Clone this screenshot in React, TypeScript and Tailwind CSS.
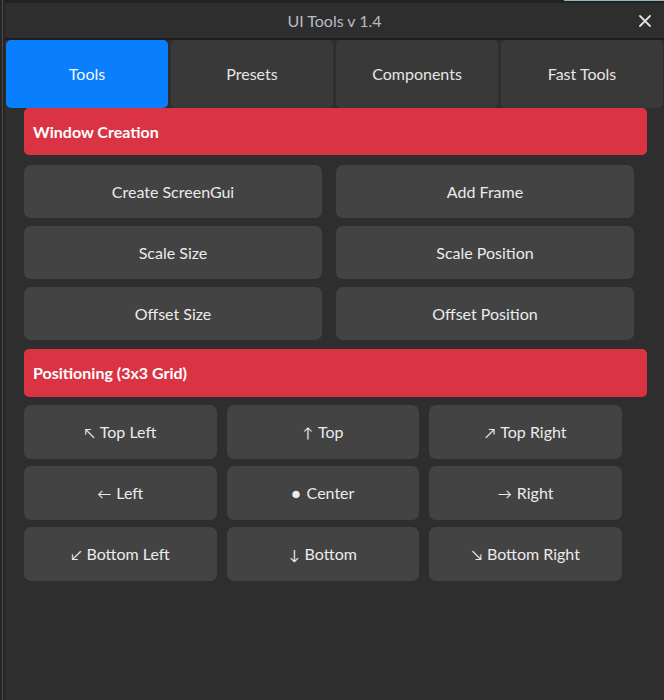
import React from "react";

const font = { fontFamily: "Lato, 'Open Sans', sans-serif" };

function Btn({ children, className = "" }: { children: React.ReactNode; className?: string }) {
  return (
    <div
      className={`flex items-center justify-center rounded-[7px] bg-[#434343] text-[16px] text-[#ebebeb] ${className}`}
    >
      {children}
    </div>
  );
}

function Header({ children, className = "" }: { children: React.ReactNode; className?: string }) {
  return (
    <div
      className={`flex w-[623px] items-center rounded-[5px] bg-[#da3444] pl-[9px] text-[16px] font-bold text-white ${className}`}
    >
      {children}
    </div>
  );
}

export default function App() {
  const tabs = ["Tools", "Presets", "Components", "Fast Tools"];
  const grid = [
    ["↖", "Top Left"],
    ["↑", "Top"],
    ["↗", "Top Right"],
    ["←", "Left"],
    ["●", "Center"],
    ["→", "Right"],
    ["↙", "Bottom Left"],
    ["↓", "Bottom"],
    ["↘", "Bottom Right"],
  ];
  return (
    <div className="flex h-[700px] w-[664px] bg-[#1f1f1f]" style={font}>
      <div className="flex h-full w-[5px] bg-[#262626]">
        <div className="ml-[2px] h-full w-[1px] bg-[#4a4a4a]" />
      </div>
      <div className="flex flex-1 flex-col">
        <div className="flex h-[3px] justify-end bg-[#222222]">
          <div className="h-[1px] w-[100px] bg-[#8fb6bf]" />
        </div>
        <div className="flex flex-1 flex-col bg-[#2e2e2e]">
          <div className="relative flex h-[37px] items-center justify-center border-b-[2px] border-[#1d1d1d] bg-[#2e2e2e]">
            <span className="text-[16px] text-[#b7bcc2]">UI Tools v 1.4</span>
            <svg
              className="absolute right-[13px] top-[12px]"
              width="12"
              height="12"
              viewBox="0 0 12 12"
              fill="none"
              stroke="#e0e0e0"
              strokeWidth="1.8"
              strokeLinecap="round"
            >
              <path d="M1 1L11 11M11 1L1 11" />
            </svg>
          </div>
          <div className="flex h-[68px] gap-[3px] pl-[1px] pr-[1px]">
            {tabs.map((t, i) => (
              <div
                key={t}
                className={`flex flex-1 items-center justify-center rounded-[5px] text-[16px] ${
                  i === 0 ? "bg-[#0a7ffe] text-[#f2f6ff]" : "bg-[#393939] text-[#e6e6e6]"
                }`}
              >
                {t}
              </div>
            ))}
          </div>
          <div className="flex flex-col pl-[19px]">
            <Header className="h-[47px]">Window Creation</Header>
            <div className="mt-[10px] grid w-[610px] grid-cols-2 gap-x-[14px] gap-y-[8px]">
              <Btn className="h-[53px]">Create ScreenGui</Btn>
              <Btn className="h-[53px]">Add Frame</Btn>
              <Btn className="h-[53px]">Scale Size</Btn>
              <Btn className="h-[53px]">Scale Position</Btn>
              <Btn className="h-[53px]">Offset Size</Btn>
              <Btn className="h-[53px]">Offset Position</Btn>
            </div>
            <div className="mt-[9px]">
              <Header className="h-[48px]">Positioning (3x3 Grid)</Header>
            </div>
            <div className="mt-[8px] grid w-[598px] grid-cols-3 gap-x-[10px] gap-y-[7px]">
              {grid.map(([a, l]) => (
                <Btn key={l} className="h-[54px]">
                  <span className={a === "●" ? "mr-[6px] text-[15px]" : "mr-[5px] text-[14px]"}>{a}</span>
                  {l}
                </Btn>
              ))}
            </div>
          </div>
        </div>
      </div>
    </div>
  );
}
